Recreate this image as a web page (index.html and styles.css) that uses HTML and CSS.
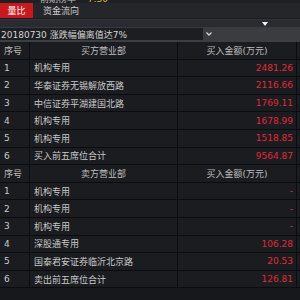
FILE: index.html
```html
<!DOCTYPE html>
<html>
<head>
<meta charset="utf-8">
<link rel="stylesheet" href="styles.css">
</head>
<body>
<div class="app">
  <div class="topstrip"><span class="ts-a">前期榜单</span><span class="ts-b">· 7:30</span></div>
  <div class="tabs">
    <div class="tab active">量比</div>
    <div class="tab">资金流向</div>
  </div>
  <div class="sep"></div>
  <div class="band"><span class="tri"></span></div>
  <div class="daterow">
    <div class="select">20180730 涨跌幅偏离值达7%</div>
    <div class="caret"><svg width="8" height="6" viewBox="0 0 8 6"><path d="M1.5 1.5 L4 4 L6.5 1.5" fill="none" stroke="#d0d0d0" stroke-width="1.3"/></svg></div>
    <div class="fill"></div>
  </div>
  <div class="table">
    <div class="row head"><div class="c1">序号</div><div class="c2">买方营业部</div><div class="c3">买入金额(万元)</div></div>
    <div class="row"><div class="c1">1</div><div class="c2 l">机构专用</div><div class="c3 num">2481.26</div></div>
    <div class="row"><div class="c1">2</div><div class="c2 l">华泰证券无锡解放西路</div><div class="c3 num">2116.66</div></div>
    <div class="row"><div class="c1">3</div><div class="c2 l">中信证券平湖建国北路</div><div class="c3 num">1769.11</div></div>
    <div class="row"><div class="c1">4</div><div class="c2 l">机构专用</div><div class="c3 num">1678.99</div></div>
    <div class="row"><div class="c1">5</div><div class="c2 l">机构专用</div><div class="c3 num">1518.85</div></div>
    <div class="row"><div class="c1">6</div><div class="c2 l">买入前五席位合计</div><div class="c3 num">9564.87</div></div>
    <div class="row head"><div class="c1">序号</div><div class="c2">卖方营业部</div><div class="c3">买入金额(万元)</div></div>
    <div class="row"><div class="c1">1</div><div class="c2 l">机构专用</div><div class="c3 num">-</div></div>
    <div class="row"><div class="c1">2</div><div class="c2 l">机构专用</div><div class="c3 num">-</div></div>
    <div class="row"><div class="c1">3</div><div class="c2 l">机构专用</div><div class="c3 num">-</div></div>
    <div class="row"><div class="c1">4</div><div class="c2 l">深股通专用</div><div class="c3 num">106.28</div></div>
    <div class="row"><div class="c1">5</div><div class="c2 l">国泰君安证券临沂北京路</div><div class="c3 num">20.53</div></div>
    <div class="row"><div class="c1">6</div><div class="c2 l">卖出前五席位合计</div><div class="c3 num">126.81</div></div>
  </div>
</div>
</body>
</html>
```

FILE: styles.css
```css
* { box-sizing: border-box; }
html, body { margin: 0; padding: 0; }
body {
  width: 300px;
  height: 300px;
  overflow: hidden;
  background: #17181c;
  font-family: "DejaVu Sans", "Noto Sans CJK SC", sans-serif;
  font-size: 9px;
  color: #c9c9c9;
}
.app { width: 300px; height: 300px; display: flex; flex-direction: column; }
.topstrip {
  height: 3px;
  overflow: hidden;
  background: #1f2024;
  display: flex;
  align-items: flex-end;
  gap: 6px;
  padding-left: 40px;
  line-height: 9px;
}
.topstrip span { display: block; flex: none; margin-bottom: -1px; }
.ts-a { color: #bdbdbd; }
.ts-b { color: #d7b43a; }
.tabs {
  height: 15px;
  background: #25262a;
  display: flex;
  align-items: stretch;
}
.tab {
  display: flex;
  align-items: center;
  padding: 0 8px 0 10px;
  color: #cfcfcf;
}
.tab.active {
  background: #c8191f;
  color: #ffffff;
  width: 33px;
  justify-content: center;
  padding: 0;
}
.sep { height: 2px; background: #34353a; border-top: 1px solid #1a1b1e; }
.band {
  height: 8px;
  background: #2a2b30;
  border-bottom: 1px solid #3a3b40;
  position: relative;
}
.tri {
  position: absolute;
  left: 262px;
  top: 2px;
  width: 0; height: 0;
  border-left: 3.5px solid transparent;
  border-right: 3.5px solid transparent;
  border-top: 4px solid #f2f2f2;
}
.daterow {
  height: 14px;
  display: flex;
  border-bottom: 2px solid #3d3e42;
}
.select {
  width: 203px;
  background: #1d1e22;
  padding-left: 1px;
  display: flex;
  align-items: center;
  color: #d4d4d4;
  white-space: nowrap;
}
.caret {
  width: 12px;
  background: #3a3b3f;
  display: flex;
  align-items: center;
  justify-content: center;
}
.fill { flex: 1; background: #3b3c40; }
.table { display: flex; flex-direction: column; }
.row {
  height: 17.6px;
  display: grid;
  grid-template-columns: 30px 148px 119px 3px;
  border-bottom: 1px solid #0c0c0f;
  background: #1b1c20;
}
.row > div {
  display: flex;
  align-items: center;
  border-right: 1px solid #0c0c0f;
  white-space: nowrap;
  overflow: hidden;
}
.c1 { padding-left: 4px; }
.c2 { justify-content: center; }
.c2.l { justify-content: flex-start; padding-left: 4px; }
.c3 { justify-content: center; }
.c3.num { justify-content: flex-end; padding-right: 3px; color: #e02a38; }
.head > div { color: #bdbdbd; }
```
